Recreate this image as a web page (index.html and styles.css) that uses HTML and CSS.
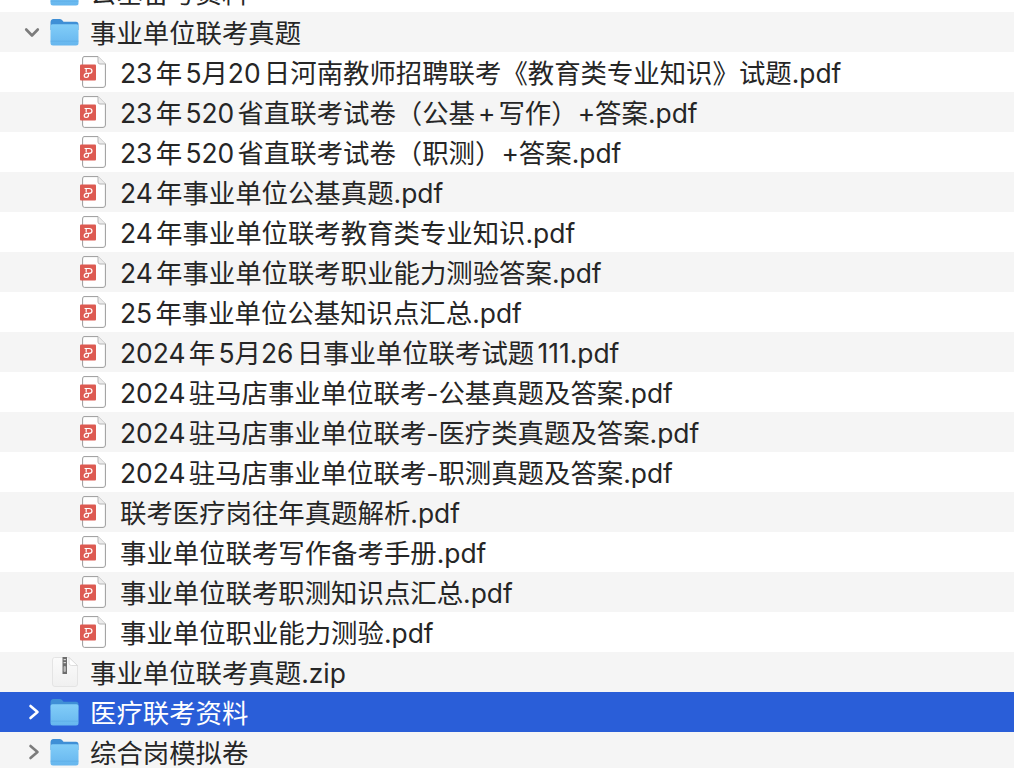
FILE: index.html
```html
<!DOCTYPE html>
<html lang="zh-CN">
<head>
<meta charset="utf-8">
<title>事业单位联考真题</title>
<link rel="stylesheet" href="styles.css">
</head>
<body>
<svg class="defs" width="0" height="0" aria-hidden="true">
  <defs>
    <linearGradient id="fb" x1="0" y1="0" x2="0" y2="1"><stop offset="0" stop-color="#82cdf8"/><stop offset="1" stop-color="#66b6ee"/></linearGradient>
    <linearGradient id="zp" x1="0" y1="0" x2="0" y2="1"><stop offset="0" stop-color="#fbfbfb"/><stop offset="1" stop-color="#f0f0f0"/></linearGradient>
    <symbol id="folder" viewBox="0 0 29 28">
      <path d="M0.5 4.5 Q0.5 1 3.5 1 H10 Q11.5 1 12.5 2.5 L13.5 3.8 H26 Q28.5 3.8 28.5 6.5 V12 H0.5 Z" fill="#3f8fd6"/>
      <path d="M0.5 8 Q0.5 6.3 2.5 6.3 H26.5 Q28.5 6.3 28.5 8 V25 Q28.5 27.5 26 27.5 H3 Q0.5 27.5 0.5 25 Z" fill="url(#fb)"/>
      <path d="M0.5 23.2 H28.5" stroke="#5ba9e4" stroke-width="0.8" opacity=".7"/>
    </symbol>
    <symbol id="pdf" viewBox="0 0 26 32">
      <path d="M4 0.6 H18 L25.4 8 V29 Q25.4 31.4 23 31.4 H4.5 Q2.6 31.4 2.6 29 V3 Q2.6 0.6 4 0.6 Z" fill="#fff" stroke="#9b9b9b" stroke-width="1"/>
      <path d="M18 0.6 V6 Q18 8 20 8 H25.4" fill="#ececec" stroke="#b5b5b5" stroke-width="1"/>
      <rect x="0" y="8.5" width="16" height="16" rx="1" fill="#dd5a52"/>
      <path d="M5 12.5 H9 Q12 12.5 12 15 Q12 17.4 9 17.4 H7 Q4.2 17.4 4.2 19.6 Q4.2 21.5 6.2 21.5 Q8.6 21.5 8.6 18.5 M6.2 12.5 V16" fill="none" stroke="#fff" stroke-width="1.2" stroke-linecap="round"/>
    </symbol>
    <symbol id="zip" viewBox="0 0 26 30">
      <path d="M2.5 0.5 H17 L25.5 8.5 V27 Q25.5 29.5 23 29.5 H3 Q0.5 29.5 0.5 27 V3 Q0.5 0.5 2.5 0.5 Z" fill="url(#zp)" stroke="#e4e4e4" stroke-width="1"/>
      <path d="M17 0.5 V6 Q17 8.5 19.5 8.5 H25.5 Z" fill="#fff" stroke="#d6d6d6" stroke-width=".8"/>
      <rect x="10.5" y="0" width="4.5" height="17" fill="#6d6d6d"/>
      <rect x="11.6" y="2" width="2.3" height="1.2" fill="#d8d8d8"/>
      <rect x="11.6" y="5" width="2.3" height="1.2" fill="#d8d8d8"/>
      <rect x="11.6" y="9" width="2.3" height="6" rx="1" fill="#b8b8b8"/>
    </symbol>
  </defs>
</svg>

<ul class="tree">
  <li class="row lv1"><span class="arrow"></span><svg class="ic-folder"><use href="#folder"/></svg><span class="name">公基备考资料</span></li>
  <li class="row lv1 alt"><svg class="chev" viewBox="0 0 16 16"><path d="M2.2 5.5 L8 11.5 L13.8 5.5"/></svg><svg class="ic-folder"><use href="#folder"/></svg><span class="name">事业单位联考真题</span></li>
  <li class="row lv2"><svg class="ic-pdf"><use href="#pdf"/></svg><span class="name">23年5<span class="tight">月</span>20日河南教师招聘联考《教育类专业知识》试题<span class="tight">.pdf</span></span></li>
  <li class="row lv2 alt"><svg class="ic-pdf"><use href="#pdf"/></svg><span class="name">23年520省直联考试卷（公基<span class="plus">+</span>写作）+答案<span class="tight">.pdf</span></span></li>
  <li class="row lv2"><svg class="ic-pdf"><use href="#pdf"/></svg><span class="name">23年520省直联考试卷（职测）+答案<span class="tight">.pdf</span></span></li>
  <li class="row lv2 alt"><svg class="ic-pdf"><use href="#pdf"/></svg><span class="name">24年事业单位公基真题<span class="tight">.pdf</span></span></li>
  <li class="row lv2"><svg class="ic-pdf"><use href="#pdf"/></svg><span class="name">24年事业单位联考教育类专业知识<span class="tight">.pdf</span></span></li>
  <li class="row lv2 alt"><svg class="ic-pdf"><use href="#pdf"/></svg><span class="name">24年事业单位联考职业能力测验答案<span class="tight">.pdf</span></span></li>
  <li class="row lv2"><svg class="ic-pdf"><use href="#pdf"/></svg><span class="name">25年事业单位公基知识点汇总<span class="tight">.pdf</span></span></li>
  <li class="row lv2 alt"><svg class="ic-pdf"><use href="#pdf"/></svg><span class="name">2024年5<span class="tight">月</span>26日事业单位联考试题111.pdf</span></li>
  <li class="row lv2"><svg class="ic-pdf"><use href="#pdf"/></svg><span class="name">2024驻马店事业单位联考-公基真题及答案<span class="tight">.pdf</span></span></li>
  <li class="row lv2 alt"><svg class="ic-pdf"><use href="#pdf"/></svg><span class="name">2024驻马店事业单位联考-医疗类真题及答案<span class="tight">.pdf</span></span></li>
  <li class="row lv2"><svg class="ic-pdf"><use href="#pdf"/></svg><span class="name">2024驻马店事业单位联考-职测真题及答案<span class="tight">.pdf</span></span></li>
  <li class="row lv2 alt"><svg class="ic-pdf"><use href="#pdf"/></svg><span class="name">联考医疗岗往年真题解析<span class="tight">.pdf</span></span></li>
  <li class="row lv2"><svg class="ic-pdf"><use href="#pdf"/></svg><span class="name">事业单位联考写作备考手册<span class="tight">.pdf</span></span></li>
  <li class="row lv2 alt"><svg class="ic-pdf"><use href="#pdf"/></svg><span class="name">事业单位联考职测知识点汇总<span class="tight">.pdf</span></span></li>
  <li class="row lv2"><svg class="ic-pdf"><use href="#pdf"/></svg><span class="name">事业单位职业能力测验<span class="tight">.pdf</span></span></li>
  <li class="row lv1 alt"><span class="arrow"></span><svg class="ic-zip"><use href="#zip"/></svg><span class="name">事业单位联考真题<span class="tight">.zip</span></span></li>
  <li class="row lv1 sel"><svg class="chev" viewBox="0 0 16 16"><path d="M6.5 2 L13.5 8 L6.5 14"/></svg><svg class="ic-folder"><use href="#folder"/></svg><span class="name">医疗联考资料</span></li>
  <li class="row lv1 alt"><svg class="chev" viewBox="0 0 16 16"><path d="M6.5 2 L13.5 8 L6.5 14"/></svg><svg class="ic-folder"><use href="#folder"/></svg><span class="name">综合岗模拟卷</span></li>
</ul>
</body>
</html>
```

FILE: styles.css
```css
html, body {
  margin: 0;
  padding: 0;
  height: 768px;
  overflow: hidden;
  background: #fff;
}

.defs {
  position: absolute;
}

.tree {
  list-style: none;
  margin: -28px 0 0;
  padding: 0;
  font-family: "Inter", "Noto Sans CJK SC", sans-serif;
  font-size: 26.4px;
  color: #262626;
  text-autospace: normal;
}

.row {
  display: flex;
  align-items: center;
  height: 40px;
  white-space: nowrap;
}

.name {
  padding-bottom: 2px;
}

.tight {
  text-autospace: no-autospace;
}

.plus {
  margin: 0 3px;
}

.alt {
  background: #f5f5f5;
}

.sel {
  background: #2a5ed8;
  color: #fff;
}

.lv1 {
  padding-left: 24px;
}

.lv2 {
  padding-left: 80px;
}

.arrow,
.chev {
  flex: none;
  width: 16px;
  height: 16px;
  margin-right: 10px;
}

.chev path {
  fill: none;
  stroke: #7c7c7c;
  stroke-width: 2.6;
  stroke-linecap: round;
  stroke-linejoin: round;
}

.sel .chev path {
  stroke: #fff;
}

.ic-folder {
  flex: none;
  width: 29px;
  height: 28px;
  margin-right: 11px;
}

.ic-zip {
  flex: none;
  width: 26px;
  height: 30px;
  margin-left: 2px;
  margin-right: 12px;
}

.ic-pdf {
  flex: none;
  width: 26px;
  height: 32px;
  margin-right: 14px;
}
```
